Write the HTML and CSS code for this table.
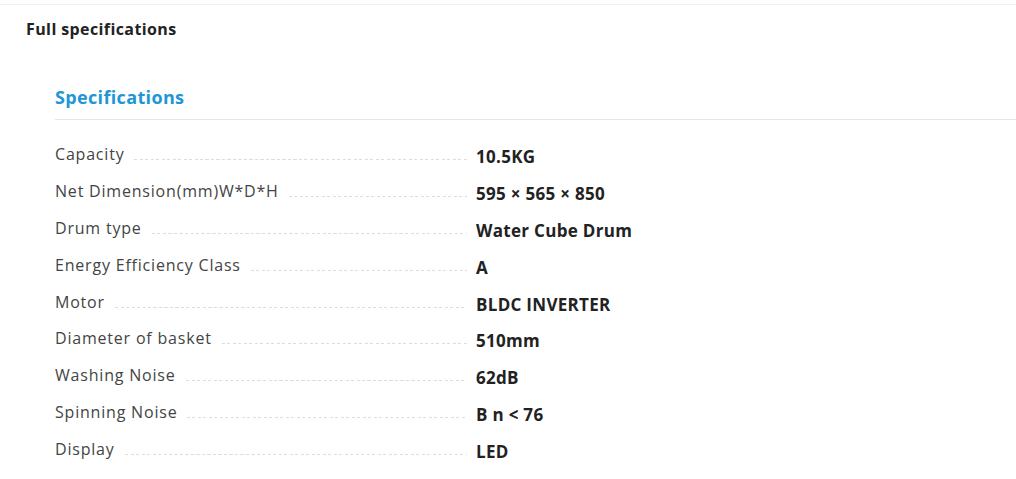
FILE: index.html
```html
<!DOCTYPE html>
<html lang="en">
<head>
<meta charset="utf-8">
<title>Full specifications</title>
<link rel="stylesheet" href="styles.css">
</head>
<body>
<div class="page">
  <h2 class="title">Full specifications</h2>
  <section class="specs">
    <h3 class="specs-title">Specifications</h3>
    <dl class="spec-list">
      <div class="row"><dt><span>Capacity</span><i class="leader"></i></dt><dd>10.5KG</dd></div>
      <div class="row"><dt><span>Net Dimension(mm)W*D*H</span><i class="leader"></i></dt><dd>595 × 565 × 850</dd></div>
      <div class="row"><dt><span>Drum type</span><i class="leader"></i></dt><dd>Water Cube Drum</dd></div>
      <div class="row"><dt><span>Energy Efficiency Class</span><i class="leader"></i></dt><dd>A</dd></div>
      <div class="row"><dt><span>Motor</span><i class="leader"></i></dt><dd>BLDC INVERTER</dd></div>
      <div class="row"><dt><span>Diameter of basket</span><i class="leader"></i></dt><dd>510mm</dd></div>
      <div class="row"><dt><span>Washing Noise</span><i class="leader"></i></dt><dd>62dB</dd></div>
      <div class="row"><dt><span>Spinning Noise</span><i class="leader"></i></dt><dd>B n &lt; 76</dd></div>
      <div class="row"><dt><span>Display</span><i class="leader"></i></dt><dd>LED</dd></div>
    </dl>
  </section>
</div>
</body>
</html>
```
FILE: styles.css
```css
html, body {
  margin: 0;
  padding: 0;
  background: #ffffff;
}

body {
  font-family: "Open Sans", "Lato", sans-serif;
  color: #333333;
}

.page {
  margin-top: 4px;
  border-top: 1px solid #f0f0f0;
  padding: 14px 0 0 0;
}

.title {
  margin: 0 0 0 26px;
  font-size: 16px;
  line-height: 20px;
  font-weight: 700;
  letter-spacing: 0.4px;
  color: #222222;
}

.specs {
  margin: 46px 0 0 55px;
}

.specs-title {
  margin: 0;
  padding-bottom: 10px;
  border-bottom: 1px solid #e6e6e6;
  font-size: 18px;
  line-height: 24px;
  font-weight: 700;
  letter-spacing: 0.35px;
  color: #2196d6;
}

.spec-list {
  margin: 16px 0 0 0;
  padding: 0;
}

.row {
  display: grid;
  grid-template-columns: 412px 1fr;
  height: 36.9px;
}

.row dt {
  display: flex;
  align-items: baseline;
  font-size: 16px;
  line-height: 36px;
  letter-spacing: 0.8px;
  color: #444444;
}

.leader {
  flex: 1;
  height: 1px;
  margin-left: 10px;
  background-image: repeating-linear-gradient(to right, #dddddd 0 3px, transparent 3px 5.5px);
}

.row dd {
  margin: 0;
  padding: 3px 0 0 9px;
  font-size: 17px;
  line-height: 36px;
  font-weight: 700;
  letter-spacing: 0.3px;
  color: #222222;
}
```
